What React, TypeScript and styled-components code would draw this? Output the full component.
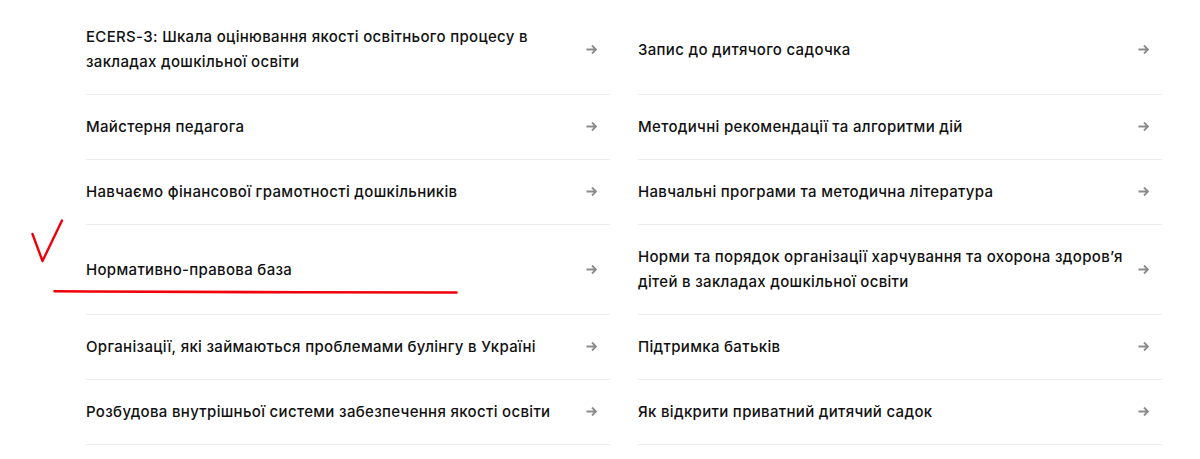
import React from "react";
import styled, { createGlobalStyle } from "styled-components";

const Global = createGlobalStyle`
  html, body { margin: 0; padding: 0; background: #fff; }
  #root { width: 1200px; height: 459px; overflow: hidden; position: relative; }
`;

const Page = styled.main`
  padding: 5px 0 0 86px;
  font-family: Inter, "Noto Sans", "Liberation Sans", sans-serif;
`;

const Grid = styled.div`
  display: grid;
  grid-template-columns: 524px 524px;
  column-gap: 28px;
`;

const Item = styled.a`
  display: flex;
  align-items: center;
  justify-content: space-between;
  box-sizing: border-box;
  min-height: 65px;
  padding: 19px 0 20px;
  border-bottom: 1px solid #ececec;
  color: #111;
  font-size: 15px;
  font-weight: 500;
  letter-spacing: 0.32px;
  line-height: 25px;
`;

const Label = styled.span`
  width: 500px;
  flex: none;
`;

const Arrow = styled.svg`
  width: 11px;
  height: 11px;
  margin-right: 15px;
  flex: none;
  fill: none;
  stroke: #8c8c8c;
  stroke-width: 1.8;
`;

const Marks = styled.svg`
  position: absolute;
  left: 0;
  top: 0;
  width: 1200px;
  height: 459px;
  fill: none;
  stroke: #f0000a;
  stroke-linecap: round;
  stroke-linejoin: round;
  pointer-events: none;
`;

const rows: [string, string][] = [
  ["ECERS-3: Шкала оцінювання якості освітнього процесу в закладах дошкільної освіти", "Запис до дитячого садочка"],
  ["Майстерня педагога", "Методичні рекомендації та алгоритми дій"],
  ["Навчаємо фінансової грамотності дошкільників", "Навчальні програми та методична література"],
  ["Нормативно-правова база", "Норми та порядок організації харчування та охорона здоров’я дітей в закладах дошкільної освіти"],
  ["Організації, які займаються проблемами булінгу в Україні", "Підтримка батьків"],
  ["Розбудова внутрішньої системи забезпечення якості освіти", "Як відкрити приватний дитячий садок"],
];

const Row = ({ text }: { text: string }) => (
  <Item>
    <Label>{text}</Label>
    <Arrow viewBox="0 0 11 11">
      <path d="M0.5 5.5h9M6 1.5l4 4-4 4" />
    </Arrow>
  </Item>
);

export default function App() {
  return (
    <>
      <Global />
      <Page>
        <Grid>
          {rows.flat().map((t) => (
            <Row key={t} text={t} />
          ))}
        </Grid>
      </Page>
      <Marks viewBox="0 0 1200 459">
        <path d="M32.5 234L42.5 261L62 220.5" strokeWidth="2.4" />
        <path d="M54.5 291.2C130 292 200 292 300 292.3L456.5 292.5" strokeWidth="2.6" />
      </Marks>
    </>
  );
}
